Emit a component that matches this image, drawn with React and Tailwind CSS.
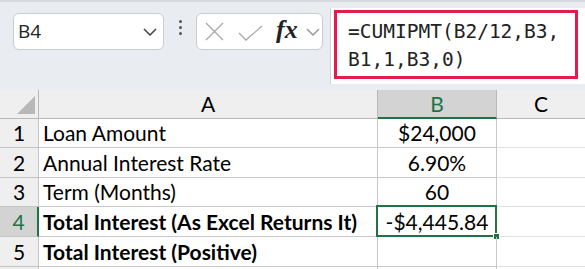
import React from 'react';

const rows = [
  { n: 1, a: 'Loan Amount', b: '$24,000', h: 'h-[29px]' },
  { n: 2, a: 'Annual Interest Rate', b: '6.90%', h: 'h-[30px]' },
  { n: 3, a: 'Term (Months)', b: '60', h: 'h-[29px]' },
  { n: 4, a: 'Total Interest (As Excel Returns It)', b: '-$4,445.84', h: 'h-[30px]', bold: true, sel: true },
  { n: 5, a: 'Total Interest (Positive)', b: '', h: 'h-[30px]', bold: true },
  { n: 6, a: '', b: '', h: 'h-[30px]', hidden: true },
];

const Chevron = ({ className }) => (
  <svg width="14" height="8" viewBox="0 0 14 8" className={className}>
    <path d="M1 1 L7 7 L13 1" fill="none" stroke="currentColor" strokeWidth="1.5" />
  </svg>
);

const App = () => {
  return (
    <div className="w-[585px] h-[269px] overflow-hidden bg-[#e9edf1] font-['Lato',sans-serif] text-black">
      {/* formula bar area */}
      <div className="h-[90px] flex items-start border-t-2 border-[#d6d9dd]">
        <div className="ml-[13px] mt-[11px] w-[151px] h-[37px] rounded-[6px] border border-[#c9ccd1] bg-white flex items-center justify-between pl-[4px] pr-[6px]">
          <span className="text-[19px] font-['Open_Sans',sans-serif] text-[#222]">B4</span>
          <Chevron className="text-[#444]" />
        </div>
        <div className="w-[32px] h-[48px] flex flex-col items-center justify-center gap-[3px] pt-[2px]">
          <span className="w-[3px] h-[3px] rounded-full bg-[#555]" />
          <span className="w-[3px] h-[3px] rounded-full bg-[#555]" />
          <span className="w-[3px] h-[3px] rounded-full bg-[#555]" />
        </div>
        <div className="mt-[11px] w-[127px] h-[37px] rounded-[6px] border border-[#c9ccd1] bg-white flex items-center pl-[8px]">
          <svg width="19" height="19" viewBox="0 0 19 19" className="text-[#a8a8a8]">
            <path d="M1 1 L18 18 M18 1 L1 18" fill="none" stroke="currentColor" strokeWidth="1.3" />
          </svg>
          <svg width="25" height="16" viewBox="0 0 25 16" className="ml-[14px] mt-[2px] text-[#a8a8a8]">
            <path d="M1 8 L8 15 L24 1" fill="none" stroke="currentColor" strokeWidth="1.3" />
          </svg>
          <span className="ml-[13px] font-['Liberation_Serif',serif] italic font-semibold text-[26px] leading-none text-[#222] -mt-[4px]">fx</span>
          <Chevron className="ml-[8px] text-[#999]" />
        </div>
        <div className="ml-[7px] mt-[6px] w-[255px] h-[76px] bg-white border-l border-[#d0d3d7]">
          <div className="ml-[3px] mt-[2px] w-[244px] h-[69px] border-[3px] border-[#e21c4b] pl-[11px] pt-[5px] font-['DejaVu_Sans_Mono',monospace] text-[19.5px] leading-[28px] text-[#222]">
            <div>=CUMIPMT(B2/12,B3,</div>
            <div>B1,1,B3,0)</div>
          </div>
        </div>
      </div>

      {/* grid */}
      <div className="bg-white">
        <div className="flex h-[29px] text-[21px]">
          <div className="w-[39px] bg-[#efefef] border-r border-b border-[#b9b9b9] relative">
            <div className="absolute right-[3px] bottom-[4px] w-0 h-0 border-l-[18px] border-l-transparent border-b-[18px] border-b-[#b8b8b8]" />
          </div>
          <div className="w-[339px] bg-[#efefef] border-r border-b border-[#b9b9b9] flex items-center justify-center">A</div>
          <div className="w-[119px] bg-[#d3d3d3] border-r border-[#b9b9b9] border-b-2 border-b-[#217346] flex items-center justify-center text-[#217346]">B</div>
          <div className="flex-1 bg-[#efefef] border-b border-[#b9b9b9] flex items-center justify-center">C</div>
        </div>
        {rows.map((r) => (
          <div key={r.n} className={`flex ${r.h} text-[21px]`}>
            <div
              className={
                r.sel
                  ? 'w-[39px] bg-[#d3d3d3] border-r-2 border-r-[#217346] border-b border-b-[#c4c4c4] flex items-center justify-center text-[#217346]'
                  : 'w-[39px] bg-[#efefef] border-r border-b border-[#c4c4c4] flex items-center justify-center'
              }
            >
              {r.hidden ? '' : r.n}
            </div>
            <div className={`w-[339px] border-r border-b border-[#c8c8c8] flex items-center pl-[4px] whitespace-nowrap ${r.bold ? 'font-bold' : ''}`}>
              {r.a}
            </div>
            <div className="w-[119px] border-r border-b border-[#c8c8c8] flex items-center justify-center relative">
              {r.sel && (
                <>
                  <div className="absolute -left-[2px] -top-[2px] -right-[1px] -bottom-[1px] border-2 border-[#217346]" />
                  <div className="absolute -right-[4px] -bottom-[4px] w-[7px] h-[7px] bg-[#217346] border border-white" />
                </>
              )}
              {r.b}
            </div>
            <div className="flex-1 border-b border-[#e0e0e0]" />
          </div>
        ))}
      </div>
    </div>
  );
};

export default App;
